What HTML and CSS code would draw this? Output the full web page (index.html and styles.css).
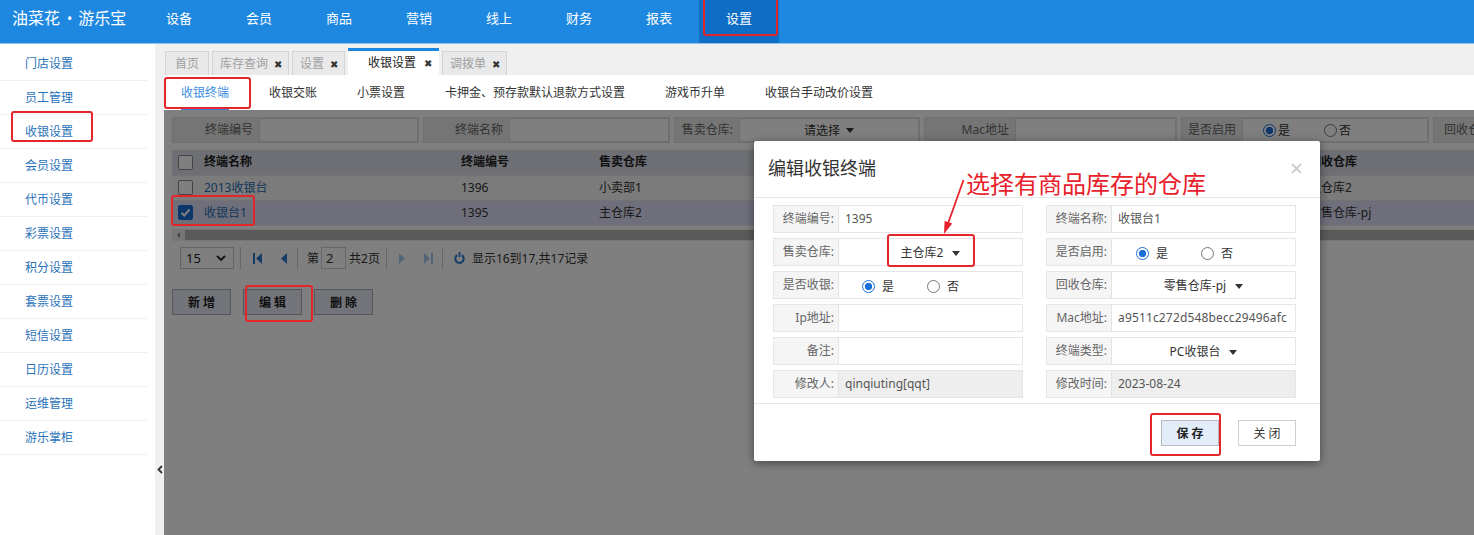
FILE: index.html
```html
<!DOCTYPE html>
<html lang="zh-CN">
<head>
<meta charset="utf-8">
<title>收银设置</title>
<link rel="stylesheet" href="styles.css">
</head>
<body>
<header class="topnav">
  <div class="logo">油菜花<span class="logo-dot">•</span>游乐宝</div>
  <nav class="menu">
    <a class="menu-item">设备</a>
    <a class="menu-item">会员</a>
    <a class="menu-item">商品</a>
    <a class="menu-item">营销</a>
    <a class="menu-item">线上</a>
    <a class="menu-item">财务</a>
    <a class="menu-item">报表</a>
    <a class="menu-item active">设置</a>
  </nav>
</header>

<div class="main">
  <aside class="sidebar">
    <ul class="side-list">
      <li>门店设置</li>
      <li>员工管理</li>
      <li>收银设置</li>
      <li>会员设置</li>
      <li>代币设置</li>
      <li>彩票设置</li>
      <li>积分设置</li>
      <li>套票设置</li>
      <li>短信设置</li>
      <li>日历设置</li>
      <li>运维管理</li>
      <li>游乐掌柜</li>
    </ul>
  </aside>
  <div class="collapse">
    <svg class="collapse-icon" width="6" height="9" viewBox="0 0 6 9"><polyline points="5,1 1.5,4.5 5,8" fill="none" stroke="#333" stroke-width="1.8"/></svg>
  </div>

  <section class="content">
    <div class="tabs">
      <div class="tab tab-home">首页</div>
      <div class="tab">库存查询<span class="tab-x">✖</span></div>
      <div class="tab">设置<span class="tab-x">✖</span></div>
      <div class="tab active">收银设置<span class="tab-x">✖</span></div>
      <div class="tab">调拨单<span class="tab-x">✖</span></div>
    </div>
    <div class="subtabs">
      <span class="subtab active">收银终端</span>
      <span class="subtab">收银交账</span>
      <span class="subtab">小票设置</span>
      <span class="subtab">卡押金、预存款默认退款方式设置</span>
      <span class="subtab">游戏币升单</span>
      <span class="subtab">收银台手动改价设置</span>
    </div>

    <div class="frame">
      <div class="page">
        <div class="search">
          <div class="sgroup"><span class="slabel w86">终端编号</span><span class="sinput w159"></span></div>
          <div class="sgroup"><span class="slabel w85">终端名称</span><span class="sinput w160"></span></div>
          <div class="sgroup"><span class="slabel w64">售卖仓库:</span><span class="sinput w180 sselect">请选择<i class="caret"></i></span></div>
          <div class="sgroup"><span class="slabel w90">Mac地址</span><span class="sinput w161"></span></div>
          <div class="sgroup"><span class="slabel w60">是否启用</span><span class="sinput w186 sradios"><i class="radio on"></i>是<i class="radio gap"></i>否</span></div>
          <div class="sgroup"><span class="slabel w64">回收仓库</span><span class="sinput w180"></span></div>
        </div>

        <div class="grid">
          <table class="gtable">
            <colgroup>
              <col class="c-chk"><col class="c-name"><col class="c-num"><col class="c-store"><col class="c-hidden"><col class="c-rec">
            </colgroup>
            <thead>
              <tr><th><i class="cbox"></i></th><th>终端名称</th><th>终端编号</th><th>售卖仓库</th><th></th><th>回收仓库</th></tr>
            </thead>
            <tbody>
              <tr><td><i class="cbox"></i></td><td class="link">2013收银台</td><td>1396</td><td>小卖部1</td><td></td><td>主仓库2</td></tr>
              <tr class="sel"><td><i class="cbox on"></i></td><td class="link">收银台1</td><td>1395</td><td>主仓库2</td><td></td><td>零售仓库-pj</td></tr>
            </tbody>
          </table>
          <div class="hscroll"><span class="harrow"></span><span class="hthumb"></span></div>
        </div>

        <div class="pager">
          <span class="psel">15<svg width="10" height="6" viewBox="0 0 10 6"><polyline points="1,1 5,5 9,1" fill="none" stroke="#222" stroke-width="1.8"/></svg></span>
          <span class="psep s1"></span>
          <svg class="pi p-first" width="9" height="11" viewBox="0 0 9 11"><rect x="0" y="0" width="2" height="11" fill="#2b79cf"/><polygon points="9,0 3,5.5 9,11" fill="#2b79cf"/></svg>
          <svg class="pi p-prev" width="6" height="11" viewBox="0 0 6 11"><polygon points="6,0 0,5.5 6,11" fill="#2b79cf"/></svg>
          <span class="psep s2"></span>
          <span class="ptxt t-di">第</span>
          <span class="pinput">2</span>
          <span class="ptxt t-gong">共2页</span>
          <span class="psep s3"></span>
          <svg class="pi p-next" width="6" height="11" viewBox="0 0 6 11"><polygon points="0,0 6,5.5 0,11" fill="#a9c9ef"/></svg>
          <svg class="pi p-last" width="9" height="11" viewBox="0 0 9 11"><polygon points="0,0 6,5.5 0,11" fill="#a9c9ef"/><rect x="7" y="0" width="2" height="11" fill="#a9c9ef"/></svg>
          <span class="psep s4"></span>
          <svg class="pi p-ref" width="11" height="12" viewBox="0 0 11 12"><path d="M3.2 3.2 A4.2 4.2 0 1 0 7.8 3.2" fill="none" stroke="#2b79cf" stroke-width="2"/><rect x="4.6" y="0" width="1.8" height="5" fill="#2b79cf"/></svg>
          <span class="ptxt t-info">显示16到17,共17记录</span>
        </div>

        <div class="actions">
          <button class="abtn">新 增</button>
          <button class="abtn">编 辑</button>
          <button class="abtn">删 除</button>
        </div>
      </div>
      <div class="mask"></div>
    </div>
  </section>
</div>

<div class="dialog">
  <div class="dlg-head">
    <span class="dlg-title">编辑收银终端</span>
    <svg class="dlg-close" width="11" height="11" viewBox="0 0 11 11"><path d="M1 1 L10 10 M10 1 L1 10" stroke="#c4c4c4" stroke-width="1.7"/></svg>
  </div>
  <div class="dlg-body">
    <div class="field"><span class="fl">终端编号:</span><span class="fv">1395</span></div>
    <div class="field"><span class="fl">终端名称:</span><span class="fv">收银台1</span></div>

    <div class="field"><span class="fl">售卖仓库:</span><span class="fv fsel">主仓库2<i class="caret"></i></span></div>
    <div class="field"><span class="fl">是否启用:</span><span class="fv fradios r-en"><i class="radio on"></i><span class="rtxt">是</span><i class="radio"></i><span class="rtxt">否</span></span></div>

    <div class="field"><span class="fl">是否收银:</span><span class="fv fradios r-cash"><i class="radio on"></i><span class="rtxt">是</span><i class="radio"></i><span class="rtxt">否</span></span></div>
    <div class="field"><span class="fl">回收仓库:</span><span class="fv fsel">零售仓库-pj<i class="caret"></i></span></div>

    <div class="field"><span class="fl">Ip地址:</span><span class="fv"></span></div>
    <div class="field"><span class="fl">Mac地址:</span><span class="fv"><span class="clip">a9511c272d548becc29496afc</span></span></div>

    <div class="field"><span class="fl">备注:</span><span class="fv"></span></div>
    <div class="field"><span class="fl">终端类型:</span><span class="fv fsel">PC收银台<i class="caret"></i></span></div>

    <div class="field"><span class="fl">修改人:</span><span class="fv ro">qinqiuting[qqt]</span></div>
    <div class="field"><span class="fl">修改时间:</span><span class="fv ro">2023-08-24</span></div>
  </div>
  <div class="dlg-foot">
    <button class="dbtn save">保 存</button>
    <button class="dbtn">关 闭</button>
  </div>
</div>

<div class="note-text">选择有商品库存的仓库</div>
<svg class="note-arrow" width="36" height="66" viewBox="0 0 36 66">
  <path d="M28.5 4 L13.2 47" stroke="#e8202a" stroke-width="1.8" fill="none"/>
  <polygon points="9,58 17.2,47.6 9.6,45" fill="#e8202a"/>
</svg>

<div class="mark mark-nav"></div>
<div class="mark mark-subtab"></div>
<div class="mark mark-side"></div>
<div class="mark mark-row"></div>
<div class="mark mark-edit"></div>
<div class="mark mark-store"></div>
<div class="mark mark-save"></div>
</body>
</html>
```

FILE: styles.css
```css
* { box-sizing: border-box; }

body {
  margin: 0;
  width: 1474px;
  height: 535px;
  overflow: hidden;
  position: relative;
  background: #fff;
  font-family: "Noto Sans", "Noto Sans CJK SC", sans-serif;
  font-size: 12px;
  color: #333;
}

button { font-family: inherit; }

/* ---------- top nav ---------- */
.topnav {
  height: 44px;
  display: flex;
  background: #1e88e1;
  box-shadow: inset 0 -1px 0 #8ec2ef;
}
.logo {
  width: 139px;
  padding-left: 12px;
  color: #fff;
  font-size: 16px;
  line-height: 37px;
  white-space: nowrap;
}
.logo-dot { margin: 0 6px 0 7px; font-size: 14px; }
.menu { display: flex; }
.menu-item {
  width: 80px;
  text-align: center;
  color: #fff;
  font-size: 13px;
  line-height: 37px;
}
.menu-item.active { background: #0e6dc5; height: 43px; }

/* ---------- layout ---------- */
.main { display: flex; height: 491px; }

.sidebar { width: 155px; background: #fff; padding-top: 3px; }
.side-list { list-style: none; margin: 0; padding: 0; width: 148px; }
.side-list li {
  height: 34px;
  line-height: 33px;
  padding-left: 25px;
  border-bottom: 1px solid #eef0f3;
  color: #2a72b8;
  font-size: 12px;
}

.collapse {
  width: 9px;
  background: #f0f0f0;
  padding-top: 421px;
  display: flex;
  justify-content: center;
}
.collapse-icon { display: block; }

.content { flex: 1; min-width: 0; display: flex; flex-direction: column; }

/* ---------- tabs ---------- */
.tabs {
  height: 31px;
  background: #f0f0f0;
  display: flex;
  align-items: flex-end;
  gap: 3px;
  padding-left: 1px;
}
.tab {
  height: 24px;
  padding: 0 6px 0 7px;
  background: #e9e9e9;
  border: 1px solid #d3d3d3;
  border-bottom: none;
  color: #a0a0a0;
  line-height: 22px;
  display: flex;
  align-items: center;
  gap: 5px;
  white-space: nowrap;
}
.tab-home { padding: 0 9px; }
.tab.active {
  height: 27px;
  background: #fff;
  border: none;
  border-top: 3px solid #1a87e0;
  color: #222;
  padding: 0 7px 0 20px;
  gap: 7px;
}
.tab-x {
  display: inline-block;
  width: 9px;
  text-align: center;
  font-size: 10px;
  color: #333;
  line-height: 1;
}

/* ---------- sub tabs ---------- */
.subtabs {
  height: 35px;
  background: #fff;
  display: flex;
  gap: 40px;
  padding-left: 17px;
}
.subtab { line-height: 35px; color: #333; white-space: nowrap; position: relative; }
.subtab.active { color: #3b8fe2; }
.subtab.active::after {
  content: "";
  position: absolute;
  left: 0; right: 0; bottom: 0;
  height: 2px;
  background: #3f7fd6;
}

/* ---------- frame / page ---------- */
.frame { flex: 1; position: relative; background: #fff; overflow: hidden; }
.page { padding: 7px 0 0 8px; }
.mask { position: absolute; inset: 0; background: rgba(0, 0, 0, 0.5); }

.search { display: flex; gap: 4px; height: 26px; white-space: nowrap; }
.sgroup { display: flex; background: #ebebeb; border: 1px solid #e0e0e0; flex: none; }
.slabel { text-align: right; padding-right: 6px; line-height: 24px; color: #666; }
.sinput { background: #fff; border: 1px solid #dcdcdc; }
.w60 { width: 60px; } .w64 { width: 64px; } .w85 { width: 85px; } .w86 { width: 86px; } .w90 { width: 90px; }
.w159 { width: 159px; } .w160 { width: 160px; } .w161 { width: 161px; } .w180 { width: 180px; } .w186 { width: 186px; }
.sselect { display: flex; justify-content: center; align-items: center; gap: 6px; color: #333; }
.sradios { display: flex; align-items: center; padding-left: 20px; color: #333; }
.sradios .radio.gap { margin-left: 34px; }
.sradios .radio { margin-right: 2px; }

.caret {
  display: inline-block;
  width: 0; height: 0;
  border-left: 4px solid transparent;
  border-right: 4px solid transparent;
  border-top: 5px solid #333;
}

.radio {
  display: inline-block;
  width: 13px; height: 13px;
  border-radius: 50%;
  border: 1px solid #767676;
  background: #fff;
  flex: none;
}
.radio.on {
  border: 1.5px solid #1a6fd8;
  background: radial-gradient(circle, #1a6fd8 0 3.4px, #fff 3.9px);
}

/* grid */
.grid { margin-top: 7px; width: 1302px; overflow: hidden; }
.gtable { border-collapse: collapse; table-layout: fixed; width: 1411px; }
.c-chk { width: 26px; } .c-name { width: 257px; } .c-num { width: 138px; } .c-store { width: 160px; }
.c-hidden { width: 550px; } .c-rec { width: 280px; }
.gtable th, .gtable td {
  height: 25px;
  padding: 0 0 0 6px;
  text-align: left;
  white-space: nowrap;
  overflow: hidden;
  font-size: 12px;
  line-height: 24px;
  border-bottom: 1px solid #e6e6e6;
}
.gtable thead tr { background: #dcdfe8; }
.gtable th { font-weight: bold; color: #222; }
.gtable tbody tr { background: #f6f6f6; }
.gtable tbody tr.sel { background: #dcdff6; }
.gtable td { color: #333; }
.gtable td.link { color: #2a6db5; }
.cbox {
  display: block;
  width: 15px; height: 15px;
  border: 1px solid #8a8a8a;
  border-radius: 2px;
  background: #fff;
}
.cbox.on {
  border-color: #1a6fd8;
  background: #1a6fd8 url("data:image/svg+xml,%3Csvg xmlns='http://www.w3.org/2000/svg' width='13' height='13' viewBox='0 0 13 13'%3E%3Cpolyline points='2.5,6.8 5.3,9.5 10.5,3.5' fill='none' stroke='white' stroke-width='2'/%3E%3C/svg%3E") center/13px no-repeat;
}

.hscroll { margin-top: 3px; height: 12px; display: flex; background: #ececec; }
.harrow { width: 13px; position: relative; }
.harrow::before {
  content: "";
  position: absolute;
  left: 5px; top: 3px;
  border-top: 3px solid transparent;
  border-bottom: 3px solid transparent;
  border-right: 3px solid #888;
}
.hthumb { flex: 1; background: #b5b5b5; margin: 1px 0; }

/* pager */
.pager {
  margin-top: 3px;
  height: 29px;
  display: flex;
  align-items: center;
  white-space: nowrap;
}
.psel {
  margin-left: 8px;
  width: 54px;
  height: 22px;
  border: 1px solid #c8c8c8;
  background: #fff;
  display: flex;
  align-items: center;
  justify-content: space-between;
  padding: 0 7px 0 5px;
  font-size: 13px;
  color: #222;
}
.psep { width: 1px; height: 22px; background: #cdcdcd; }
.s1 { margin-left: 6px; }
.pi { display: block; flex: none; }
.p-first { margin-left: 12px; }
.p-prev { margin-left: 19px; }
.s2 { margin-left: 10px; }
.t-di { margin-left: 9px; }
.pinput {
  margin-left: 2px;
  width: 25px;
  height: 22px;
  border: 1px solid #cfcfcf;
  background: #fff;
  padding-left: 4px;
  line-height: 20px;
  font-size: 13px;
}
.t-gong { margin-left: 3px; }
.s3 { margin-left: 6px; }
.p-next { margin-left: 12px; }
.p-last { margin-left: 19px; }
.s4 { margin-left: 9px; }
.p-ref { margin-left: 11px; }
.t-info { margin-left: 7px; }
.ptxt { font-size: 12px; color: #333; }

/* actions */
.actions { margin-top: 16px; display: flex; gap: 12px; }
.abtn {
  width: 59px;
  height: 26px;
  background: #e4e8f3;
  border: 1px solid #a7acb6;
  font-weight: bold;
  font-size: 12px;
  color: #222;
  padding: 0;
}

/* ---------- dialog ---------- */
.dialog {
  position: absolute;
  left: 754px;
  top: 141px;
  width: 566px;
  height: 320px;
  background: #fff;
  border-radius: 2px;
  box-shadow: 0 2px 10px rgba(0, 0, 0, 0.45);
}
.dlg-head {
  height: 57px;
  border-bottom: 1px solid #e5e5e5;
  display: flex;
  align-items: center;
  justify-content: space-between;
  padding: 0 18px 2px 14px;
}
.dlg-title { font-size: 18px; color: #333; line-height: 24px; }
.dlg-close { display: block; }

.dlg-body {
  padding: 7px 24px 5px 19px;
  display: grid;
  grid-template-columns: 250px 250px;
  grid-auto-rows: 28px;
  column-gap: 23px;
  row-gap: 5px;
}
.field { display: flex; border: 1px solid #e6e6e6; }
.fl {
  width: 64px;
  flex: none;
  background: #f5f5f5;
  text-align: right;
  padding-right: 4px;
  line-height: 26px;
  color: #666;
  white-space: nowrap;
}
.fv {
  flex: 1;
  min-width: 0;
  border-left: 1px solid #e3e3e3;
  background: #fff;
  padding-left: 6px;
  line-height: 26px;
  color: #555;
  white-space: nowrap;
  overflow: hidden;
}
.fv.ro { background: #eeeeee; }
.fsel { display: flex; align-items: center; justify-content: center; gap: 9px; padding-left: 0; color: #333; padding-top: 2px; }
.fradios { display: flex; align-items: center; padding-top: 3px; color: #333; }
.r-cash { padding-left: 23px; }
.r-en { padding-left: 24px; }
.rtxt { margin-left: 7px; margin-right: 33px; }
.clip { display: block; overflow: hidden; margin-right: 8px; letter-spacing: 0.15px; }

.dlg-foot {
  border-top: 1px solid #e5e5e5;
  height: 58px;
  display: flex;
  justify-content: flex-end;
  align-items: flex-start;
  gap: 19px;
  padding: 16px 24px 0 0;
}
.dbtn {
  width: 58px;
  height: 26px;
  background: #fff;
  border: 1px solid #cfcfcf;
  font-size: 12px;
  color: #333;
  padding: 0;
}
.dbtn.save { background: #e3edfa; border-color: #b5b9c0; font-weight: bold; color: #222; }

/* ---------- annotations ---------- */
.note-text {
  position: absolute;
  left: 966px;
  top: 168px;
  font-size: 24px;
  line-height: 32px;
  color: #e8202a;
  white-space: nowrap;
}
.note-arrow { position: absolute; left: 935px; top: 176px; }

.mark { position: absolute; border: 2px solid #e2262c; border-radius: 3px; }
.mark-nav { left: 703px; top: -3px; width: 75px; height: 39px; }
.mark-subtab { left: 164px; top: 77px; width: 87px; height: 32px; }
.mark-side { left: 11px; top: 111px; width: 82px; height: 31px; }
.mark-row { left: 171px; top: 195px; width: 84px; height: 31px; }
.mark-edit { left: 245px; top: 285px; width: 68px; height: 37px; }
.mark-store { left: 887px; top: 234px; width: 88px; height: 33px; }
.mark-save { left: 1150px; top: 413px; width: 71px; height: 43px; }
```
